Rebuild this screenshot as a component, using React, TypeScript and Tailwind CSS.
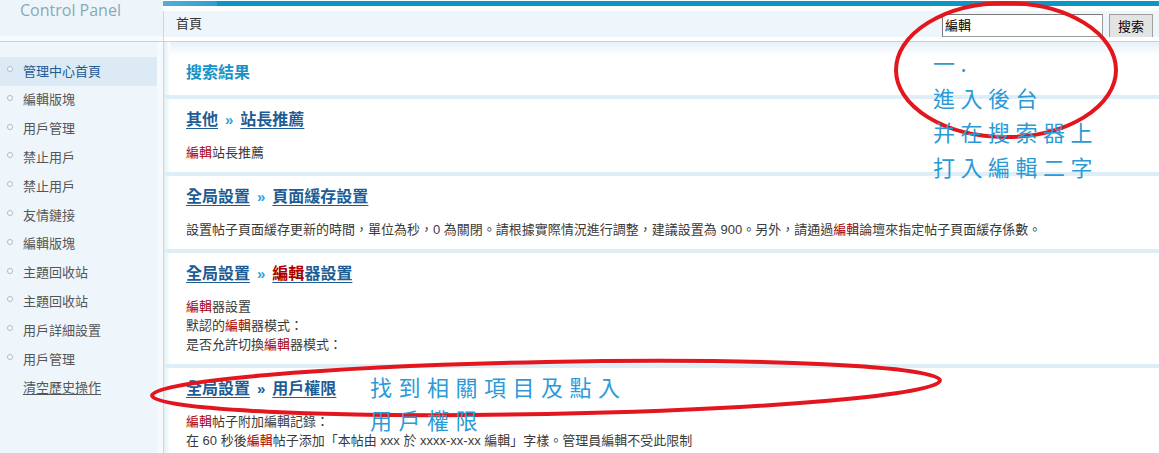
import React from "react";

const FONT = { fontFamily: '"Liberation Sans", "Noto Sans CJK TC", sans-serif' };
const HAND = { fontFamily: '"Noto Sans CJK TC", "Noto Sans CJK SC", sans-serif' };

const Red = ({ children }: { children: React.ReactNode }) => (
  <span className="text-[#a80000]">{children}</span>
);

const sideItems = [
  "管理中心首頁",
  "編輯版塊",
  "用戶管理",
  "禁止用戶",
  "禁止用戶",
  "友情鏈接",
  "編輯版塊",
  "主題回收站",
  "主題回收站",
  "用戶詳細設置",
  "用戶管理",
];

function Title({
  a,
  b,
  darkArrow,
}: {
  a: React.ReactNode;
  b: React.ReactNode;
  darkArrow?: boolean;
}) {
  return (
    <div className="h-[24px] leading-[24px] text-[16px] font-bold flex items-center">
      <span className="text-[#1e5c95] underline underline-offset-[3px]">{a}</span>
      <span
        className={
          "mx-[7px] text-[15px] " + (darkArrow ? "text-[#1e5c95]" : "text-[#2ea3d8]")
        }
      >
        »
      </span>
      <span className="text-[#1e5c95] underline underline-offset-[3px]">{b}</span>
    </div>
  );
}

function Section({
  title,
  lines,
}: {
  title: React.ReactNode;
  lines: React.ReactNode[];
}) {
  return (
    <div>
      <div className="h-[4px] bg-[#deedf6]" />
      <div className="pt-[9px] pb-[10px] pl-[22px]">
        {title}
        <div className="mt-[11px] text-[13px] leading-[19px] text-[#3a3a3a]">
          {lines.map((l, i) => (
            <div key={i} className="whitespace-nowrap">
              {l}
            </div>
          ))}
        </div>
      </div>
    </div>
  );
}

export default function App() {
  return (
    <div
      className="relative w-[1159px] h-[453px] overflow-hidden bg-white flex flex-col"
      style={FONT}
    >
      {/* Header */}
      <div className="flex h-[42px] border-b border-[#c3d3dc] shrink-0">
        <div className="w-[163px] flex flex-col">
          <div className="h-[36px] bg-[#eef5fa] pl-[20px]">
            <div
              className="leading-[20px] text-[16px] text-[#87a9b9]"
              style={{ fontFamily: '"Open Sans", sans-serif' }}
            >
              Control Panel
            </div>
          </div>
          <div className="flex-1 bg-[#f7fbfd]" />
        </div>
        <div className="flex-1 flex flex-col">
          <div className="h-[1px] bg-white" />
          <div className="h-[5px] flex">
            <div className="w-[54px] bg-gradient-to-r from-[#4fb0d8] to-[#2aa0cf]" />
            <div className="flex-1 bg-[#0b97c4]" />
          </div>
          <div className="h-[5px] bg-white" />
          <div className="h-[26px] bg-[#eef6fb] border-l border-[#c9d9e3] flex items-start">
            <div className="pl-[12px] h-[26px] flex items-center text-[13px] text-[#333]">
              首頁
            </div>
            <div className="ml-auto mt-[3px] flex items-start mr-[6px]">
              <div className="w-[161px] h-[23px] bg-white border border-[#9a9a9a] border-t-[#7a7a7a] border-l-[#7a7a7a] text-[13px] leading-[21px] pl-[2px] text-black">
                編輯
              </div>
              <div className="ml-[6px] w-[44px] h-[25px] bg-[#e3e3e3] border border-[#a0a0a0] text-[13px] leading-[23px] text-center text-black">
                搜索
              </div>
            </div>
          </div>
          <div className="flex-1 bg-white border-l border-[#c9d9e3]" />
        </div>
      </div>

      {/* Body */}
      <div className="flex flex-1 min-h-0">
        <div className="w-[164px] flex shrink-0 border-r border-[#c9d9e3]">
          <div className="w-[157px] bg-[#eef6fb] pt-[15px]">
            {sideItems.map((t, i) => (
              <div
                key={i}
                className={
                  "h-[28.8px] flex items-center pl-[23px] relative text-[13px] " +
                  (i === 0 ? "bg-[#dbeaf5] text-[#1f5a92]" : "text-[#555]")
                }
              >
                <span className="absolute left-[7px] top-[9px] w-[6px] h-[6px] rounded-full border border-[#b5b5b5] bg-white" />
                {t}
              </div>
            ))}
            <div className="h-[28.8px] flex items-center pl-[23px] text-[13px] text-[#555] underline underline-offset-2">
              清空歷史操作
            </div>
          </div>
          <div className="flex-1 bg-[#f6fafd]" />
        </div>

        <div className="flex-1 flex min-w-0">
          <div className="w-[6px] bg-gradient-to-r from-[#e2eef6] to-white shrink-0" />
          <div className="flex-1 bg-[linear-gradient(to_bottom,#e6f1f8,#ffffff_14px)] min-w-0">
            <div className="pt-[19px] pl-[16px] h-[53px]">
              <div className="h-[24px] leading-[24px] text-[16px] font-bold text-[#1b92c4]">
                搜索結果
              </div>
            </div>
            <div className="ml-[-6px]">
              <Section
                title={<Title a="其他" b="站長推薦" />}
                lines={[
                  <>
                    <Red>編輯</Red>站長推薦
                  </>,
                ]}
              />
              <Section
                title={<Title a="全局設置" b="頁面緩存設置" />}
                lines={[
                  <>
                    設置帖子頁面緩存更新的時間，單位為秒，0 為關閉。請根據實際情況進行調整，建議設置為 900。另外，請通過
                    <Red>編輯</Red>論壇來指定帖子頁面緩存係數。
                  </>,
                ]}
              />
              <Section
                title={
                  <Title
                    a="全局設置"
                    b={
                      <>
                        <span className="text-[#a80000]">編輯</span>器設置
                      </>
                    }
                  />
                }
                lines={[
                  <>
                    <Red>編輯</Red>器設置
                  </>,
                  <>
                    默認的<Red>編輯</Red>器模式：
                  </>,
                  <>
                    是否允許切換<Red>編輯</Red>器模式：
                  </>,
                ]}
              />
              <Section
                title={<Title a="全局設置" b="用戶權限" darkArrow />}
                lines={[
                  <>
                    <Red>編輯</Red>帖子附加編輯記錄：
                  </>,
                  <>
                    在 60 秒後<Red>編輯</Red>帖子添加「本帖由 xxx 於 xxxx-xx-xx 編輯」字樣。管理員編輯不受此限制
                  </>,
                ]}
              />
            </div>
          </div>
        </div>
      </div>

      {/* Annotations overlay */}
      <svg
        className="absolute left-0 top-0 pointer-events-none"
        width="1159"
        height="453"
        viewBox="0 0 1159 453"
      >
        <ellipse cx="1006" cy="70" rx="110" ry="67" fill="none" stroke="#e3161e" strokeWidth="4" />
        <ellipse
          cx="546"
          cy="388"
          rx="394"
          ry="26"
          fill="none"
          stroke="#e3161e"
          strokeWidth="4"
          transform="rotate(-1.1 546 388)"
        />
      </svg>
      <div
        className="absolute left-[933px] top-[45px] text-[22px] leading-[34.7px] tracking-[5.5px] text-[#2b9ad6] font-normal whitespace-nowrap pointer-events-none"
        style={HAND}
      >
        <div>一.</div>
        <div>進入後台</div>
        <div>并在搜索器上</div>
        <div>打入編輯二字</div>
      </div>
      <div
        className="absolute left-[370px] top-[370px] text-[22px] leading-[33px] tracking-[6.5px] text-[#2b9ad6] font-normal whitespace-nowrap pointer-events-none"
        style={HAND}
      >
        <div>找到相關項目及點入</div>
        <div>用戶權限</div>
      </div>
    </div>
  );
}
